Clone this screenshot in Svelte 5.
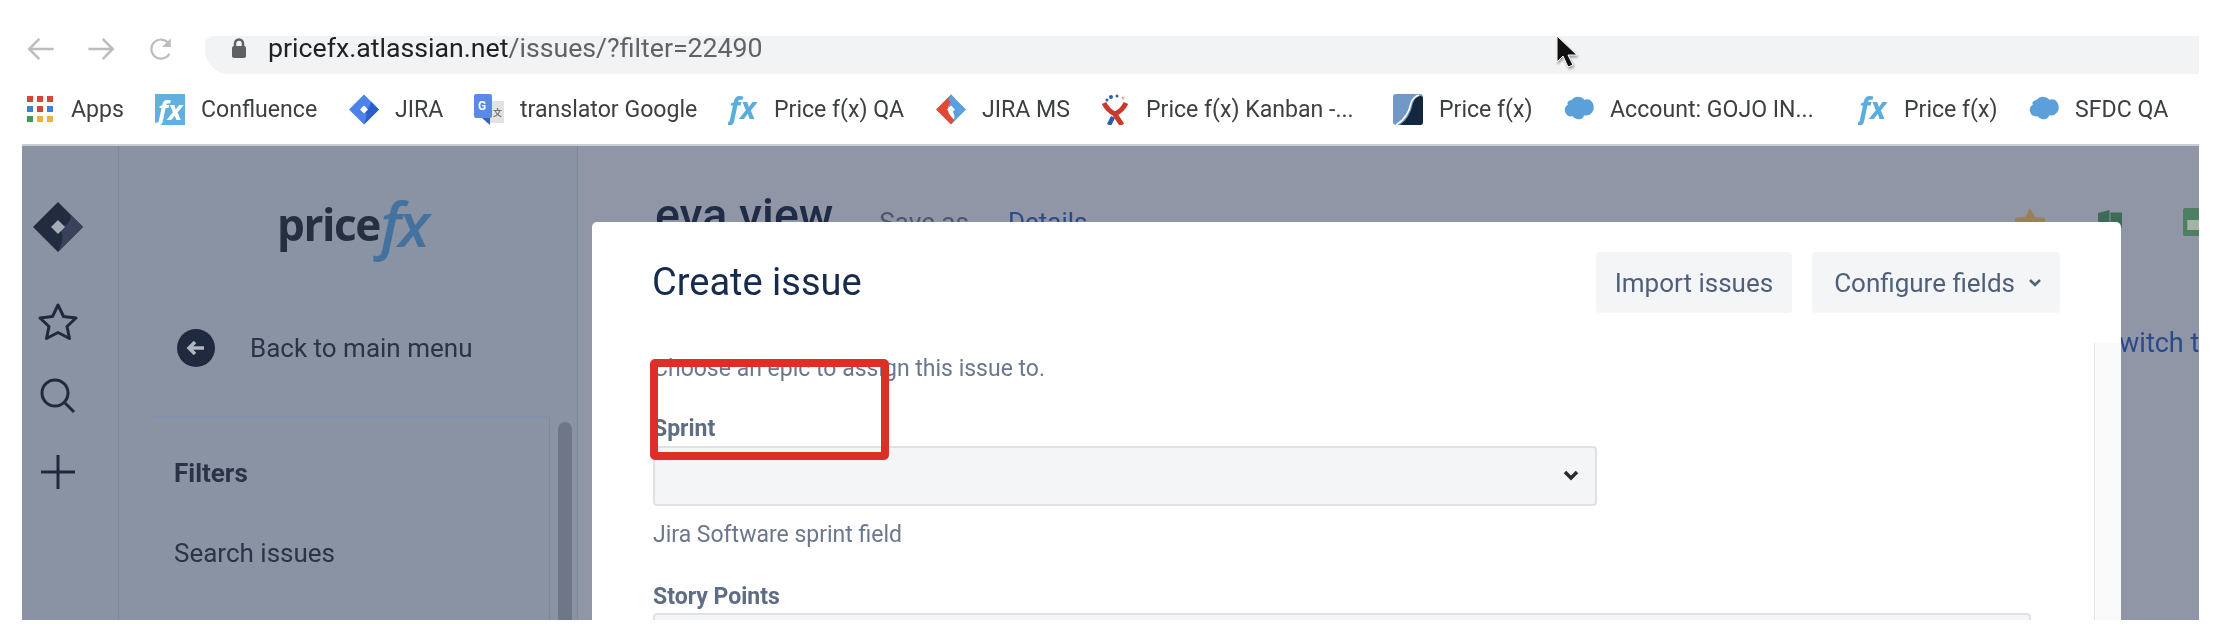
<script lang="ts">
	const bookmarks = [
		{ icon: 'apps', label: 'Apps', width: 130 },
		{ icon: 'fxbox', label: 'Confluence', width: 194 },
		{ icon: 'jira', label: 'JIRA', width: 125 },
		{ icon: 'translate', label: 'translator Google', width: 254 },
		{ icon: 'fx', label: 'Price f(x) QA', width: 208 },
		{ icon: 'jirams', label: 'JIRA MS', width: 164 },
		{ icon: 'kanban', label: 'Price f(x) Kanban -...', width: 293 },
		{ icon: 'swoosh', label: 'Price f(x)', width: 171 },
		{ icon: 'cloud', label: 'Account: GOJO IN...', width: 294 },
		{ icon: 'fx', label: 'Price f(x)', width: 171 },
		{ icon: 'cloud', label: 'SFDC QA', width: 160 }
	];
	const appColors = ['#d6453a', '#d6453a', '#d6453a', '#3f7fd8', '#d6453a', '#3f7fd8', '#3f9a55', '#eeb23e', '#eeb23e'];
</script>

<div class="shot">
	<header class="toolbar">
		<svg class="nav back-nav" viewBox="0 0 38 30" aria-hidden="true"><path d="M34 15H5M17 3 5 15l12 12" /></svg>
		<svg class="nav" viewBox="0 0 38 30" aria-hidden="true"><path d="M4 15h29M21 3l12 12-12 12" /></svg>
		<svg class="nav reload" viewBox="0 0 38 38" aria-hidden="true">
			<path d="M29 24a13 13 0 1 1-1-14" />
			<path class="solid" d="M31 3v12H19z" />
		</svg>
		<div class="omnibox">
			<svg class="lock" viewBox="0 0 16 20" aria-hidden="true">
				<rect x="1" y="8" width="14" height="12" rx="2" />
				<path d="M4 9V5.500a4 4 0 0 1 8 0V9" />
			</svg>
			<span class="url"><span class="host">pricefx.atlassian.net</span>/issues/?filter=22490</span>
		</div>
	</header>

	<nav class="bookmarks">
		{#each bookmarks as mark}
			<div class="mark" style="width: {mark.width}px">
				<span class="mark-icon">
					{#if mark.icon === 'apps'}
						<span class="apps">
							{#each appColors as color}
								<i style="background: {color}"></i>
							{/each}
						</span>
					{:else if mark.icon === 'fxbox'}
						<svg viewBox="0 0 30 31" aria-hidden="true">
							<rect width="30" height="31" fill="#62b0e0" />
							<text x="3" y="26" class="fx-glyph" fill="#fff" font-size="27">fx</text>
						</svg>
					{:else if mark.icon === 'jira'}
						<svg viewBox="0 0 30 30" aria-hidden="true">
							<path d="M15 0 30 15 15 30 0 15z" fill="#4c82ea" />
							<path d="M15 30 30 15 22 7q-1 8-7 8 5 4 0 15z" fill="#2c5fc9" />
							<path d="M15 11l4 4-4 4-4-4z" fill="#fff" />
						</svg>
					{:else if mark.icon === 'translate'}
						<svg viewBox="0 0 30 31" aria-hidden="true">
							<rect x="12" y="7" width="18" height="22" fill="#e3e3e3" />
							<rect width="18" height="24" rx="2" fill="#5b8ae6" />
							<path d="M8 24h8v7z" fill="#3e5cc0" />
							<text x="4" y="16" class="tiny" fill="#fff">G</text>
							<text x="19" y="22" class="tiny dark" fill="#777">文</text>
						</svg>
					{:else if mark.icon === 'fx'}
						<svg viewBox="0 0 30 31" aria-hidden="true">
							<text x="1" y="25" class="fx-glyph" fill="#5aaede" font-size="30">fx</text>
						</svg>
					{:else if mark.icon === 'jirams'}
						<svg viewBox="0 0 30 30" aria-hidden="true">
							<path d="M15 0 0 15l15 15 4-4-4-4q-6-7 0-14l4-4z" fill="#df4a36" />
							<path d="M15 0 30 15 15 30q7-8 0-15-5-4 0-7l-3-3z" fill="#5aa0e0" />
							<path d="M15 11l4 4-4 4-4-4z" fill="#fff" />
						</svg>
					{:else if mark.icon === 'kanban'}
						<svg viewBox="0 0 30 31" aria-hidden="true">
							<circle cx="11" cy="3" r="2" fill="#2f5ca8" />
							<circle cx="17" cy="2" r="1.500" fill="#2f5ca8" />
							<circle cx="23" cy="4" r="1.500" fill="#e8a9a0" />
							<circle cx="7" cy="6" r="1.500" fill="#2f5ca8" />
							<path d="M13 23 9 31" fill="none" stroke="#2f5ca8" stroke-width="4.500" />
							<path d="M4 9Q8 17 15 20 22 17 26 9M14 19l8 12" fill="none" stroke="#c93a2b" stroke-width="5" />
						</svg>
					{:else if mark.icon === 'swoosh'}
						<svg viewBox="0 0 30 31" aria-hidden="true">
							<rect width="30" height="31" rx="3" fill="#7199c8" />
							<path d="M7 31Q17 24 20 9 22 3 27 2q3 0 3 2v24q0 3-3 3z" fill="#15263f" />
							<path d="M3 31Q15 24 18 9 20 3 26 1" fill="none" stroke="#fff" stroke-width="1.500" />
						</svg>
					{:else}
						<svg viewBox="0 0 31 28" aria-hidden="true">
							<path d="M8 4q3-4 8-3 3 0 5 3 6-2 9 4 2 5-1 9-3 4-8 3-2 5-7 4-3 0-5-3-6 1-8-5-1-5 3-7-2-3 4-5z" fill="#5b9fdb" />
						</svg>
					{/if}
				</span>
				<span class="mark-label">{mark.label}</span>
			</div>
		{/each}
	</nav>

	<div class="page">
		<aside class="rail">
			<svg class="rail-logo" viewBox="0 0 50 50" aria-hidden="true">
				<path d="M25 0 50 25 25 50 0 25z" fill="#222c40" />
				<path d="M25 50 50 25 38 13q-1 12-13 12 9 8 0 25z" fill="#38425a" />
				<path d="M25 18l7 7-7 7-7-7z" fill="#a5acb8" />
			</svg>
			<span class="rail-slot">
				<svg width="40" height="38" viewBox="0 0 40 38" aria-hidden="true">
					<path d="M20 3l5.500 11.500 12.500 1.500-9 8.500 2.500 12L20 30.500 8.500 36.500l2.500-12-9-8.500 12.500-1.500z" />
				</svg>
			</span>
			<span class="rail-slot">
				<svg width="36" height="36" viewBox="0 0 36 36" aria-hidden="true">
					<circle cx="15" cy="15" r="13" />
					<path d="M25 25l9 9" />
				</svg>
			</span>
			<span class="rail-slot">
				<svg width="36" height="36" viewBox="0 0 36 36" aria-hidden="true"><path d="M18 1v34M1 18h34" /></svg>
			</span>
		</aside>

		<aside class="sidebar">
			<div class="brand">
				<span class="brand-price">price</span><span class="brand-fx">fx</span>
			</div>
			<div class="back">
				<span class="back-dot">
					<svg width="20" height="18" viewBox="0 0 20 18" aria-hidden="true"><path d="M18 9H3M9 3 3 9l6 6" /></svg>
				</span>
				<span>Back to main menu</span>
			</div>
			<div class="filters">
				<div class="filter-list">
					<div class="filter-row strong">Filters</div>
					<div class="filter-row">Search issues</div>
				</div>
				<div class="thumb"></div>
			</div>
		</aside>

		<main class="content">
			<div class="title-row">
				<h1>eva view</h1>
				<span class="save">Save as</span>
				<span class="details">Details</span>
				<span class="tools">
					<svg class="star" viewBox="0 0 30 14" aria-hidden="true"><path d="M15 0l5 9 10 1v4H0v-4l10-1z" /></svg>
					<svg class="sheet excel" viewBox="0 0 50 40" preserveAspectRatio="none" aria-hidden="true">
						<path d="M0 6 24 0v40L0 34z" />
						<rect x="26" y="5" width="24" height="30" />
					</svg>
					<svg class="sheet green" viewBox="0 0 36 56" preserveAspectRatio="none" aria-hidden="true">
						<path d="M0 3q0-3 3-3h22l11 11v42q0 3-3 3H3q-3 0-3-3z" />
						<rect x="6" y="24" width="20" height="20" fill="#a3b3a5" />
					</svg>
				</span>
			</div>
			<div class="switch">Switch to</div>
		</main>

		<section class="modal" aria-label="Create issue">
			<div class="modal-head">
				<h2>Create issue</h2>
				<div class="modal-actions">
					<button type="button" class="import">Import issues</button>
					<button type="button" class="configure">
						Configure fields
						<svg width="14" height="10" viewBox="0 0 14 10" aria-hidden="true"><path d="M2 2l5 5 5-5" /></svg>
					</button>
				</div>
			</div>
			<div class="modal-body">
				<form class="fields">
					<p class="hint first">Choose an epic to assign this issue to.</p>
					<div class="label">Sprint</div>
					<div class="select">
						<svg width="18" height="14" viewBox="0 0 18 14" aria-hidden="true"><path d="M3 3l6 6 6-6" /></svg>
					</div>
					<p class="hint">Jira Software sprint field</p>
					<div class="label points">Story Points</div>
					<div class="input"></div>
				</form>
				<div class="modal-track"></div>
			</div>
			<div class="annotation"></div>
		</section>
	</div>

	<svg class="cursor" width="24" height="34" viewBox="0 0 24 34" aria-hidden="true">
		<path d="M2 1v26l6-6 5 11 5-2-5-10h9z" />
	</svg>
</div>

<style>
	:global(body) {
		background: #fff;
	}

	.shot {
		position: relative;
		box-sizing: border-box;
		width: 2222px;
		height: 640px;
		padding: 36px 23px 20px 22px;
		overflow: hidden;
		background: #fff;
		font-family: Roboto, 'Liberation Sans', sans-serif;
		filter: blur(0.6px);
	}

	.toolbar {
		display: flex;
		align-items: flex-start;
		height: 38px;
	}

	.nav {
		flex: none;
		width: 32px;
		height: 26px;
		margin-right: 31px;
		fill: none;
		stroke: #bdbdbd;
		stroke-width: 3;
	}

	.back-nav {
		margin-right: 28px;
		margin-left: 3px;
	}

	.reload {
		width: 28px;
		height: 28px;
		margin-right: 0;
	}

	.reload .solid {
		fill: #bdbdbd;
		stroke: none;
	}

	.omnibox {
		display: flex;
		flex: 1;
		align-items: center;
		align-self: stretch;
		margin-left: 29px;
		padding: 0 0 14px 26px;
		border-radius: 8px 0 0 24px;
		background: #f1f3f4;
	}

	.lock {
		width: 16px;
		height: 20px;
		fill: #5f6063;
		stroke: none;
	}

	.lock path {
		fill: none;
		stroke: #5f6063;
		stroke-width: 2.500;
	}

	.url {
		margin-left: 21px;
		color: #5f6368;
		font-size: 26.700px;
		white-space: nowrap;
	}

	.host {
		color: #202124;
	}

	.bookmarks {
		display: flex;
		align-items: center;
		height: 70px;
		padding-left: 3px;
	}

	.mark {
		display: flex;
		flex: none;
		align-items: center;
		gap: 16px;
	}

	.mark-icon {
		display: flex;
		flex: none;
		align-items: center;
		justify-content: center;
		width: 30px;
		height: 31px;
	}

	.mark-icon svg {
		width: 30px;
		height: 31px;
	}

	.mark-label {
		color: #3c4043;
		font-size: 23.100px;
		white-space: nowrap;
	}

	.apps {
		display: grid;
		grid-template-columns: repeat(3, 6px);
		gap: 4px;
	}

	.apps i {
		display: block;
		width: 6px;
		height: 6px;
	}

	.fx-glyph {
		font-family: 'Open Sans', sans-serif;
		font-style: italic;
		font-weight: 700;
	}

	.tiny {
		font-family: Roboto, sans-serif;
		font-size: 12px;
		font-weight: 700;
	}

	.tiny.dark {
		font-family: 'Noto Sans CJK SC', sans-serif;
		font-size: 9px;
	}

	.page {
		position: relative;
		display: flex;
		height: 476px;
		overflow: hidden;
		border-top: 2px solid #c9ccd3;
		box-sizing: border-box;
		background: #9096a5;
		color: #2a3347;
	}

	.rail {
		display: flex;
		flex: none;
		flex-direction: column;
		align-items: center;
		box-sizing: border-box;
		width: 97px;
		padding: 56px 25px 0 0;
		border-right: 1px solid #7f8899;
		background: #8a93a3;
	}

	.rail-logo {
		flex: none;
		width: 50px;
		height: 50px;
		margin-bottom: 31px;
	}

	.rail-slot {
		display: flex;
		flex: none;
		align-items: center;
		justify-content: center;
		height: 75.500px;
	}

	.rail-slot svg {
		fill: none;
		stroke: #1f2a3e;
		stroke-width: 3;
		stroke-linejoin: round;
	}

	.sidebar {
		display: flex;
		flex: none;
		flex-direction: column;
		box-sizing: border-box;
		width: 459px;
		border-right: 1px solid #7f8899;
		background: #8a93a3;
	}

	.brand {
		display: flex;
		align-items: center;
		justify-content: center;
		box-sizing: border-box;
		height: 168px;
		padding: 0 0 14px 8px;
		line-height: 1;
	}

	.brand-price {
		margin-right: -2px;
		color: #262f42;
		font-family: 'Open Sans', sans-serif;
		font-size: 45px;
		font-weight: 700;
		letter-spacing: -1.500px;
		transform: scaleX(0.98);
		transform-origin: left center;
	}

	.brand-fx {
		color: #44719e;
		font-family: 'Open Sans', sans-serif;
		font-size: 62px;
		font-style: italic;
		font-weight: 600;
		letter-spacing: -3px;
	}

	.back {
		display: flex;
		align-items: center;
		gap: 35px;
		height: 68px;
		padding-left: 58px;
		font-size: 26px;
	}

	.back-dot {
		display: flex;
		align-items: center;
		justify-content: center;
		width: 38px;
		height: 38px;
		border-radius: 50%;
		background: #1f2a3e;
	}

	.back-dot svg {
		fill: none;
		stroke: #b0b5c0;
		stroke-width: 3.500;
	}

	.filters {
		display: flex;
		flex: 1;
		margin: 34px 0 0 31px;
	}

	.filter-list {
		box-sizing: border-box;
		width: 400px;
		padding: 15px 0 0 24px;
		border-top: 2px solid #8290ab;
		border-right: 1px solid #7f8899;
	}

	.filter-row {
		display: flex;
		align-items: center;
		height: 80px;
		font-size: 26px;
	}

	.filter-row.strong {
		font-weight: 700;
	}

	.thumb {
		width: 14px;
		margin: 6px 0 0 8px;
		border-radius: 7px 7px 0 0;
		background: #6f7686;
	}

	.content {
		flex: 1;
		min-width: 0;
		padding-left: 77px;
		overflow: hidden;
	}

	.title-row {
		display: flex;
		align-items: baseline;
		height: 96px;
	}

	h1 {
		margin: 43px 0 0;
		color: #1f2b47;
		font-size: 46.500px;
		font-weight: 500;
		line-height: 52px;
	}

	.save,
	.details {
		font-size: 26px;
	}

	.save {
		margin-left: 46px;
		color: #4d566b;
	}

	.details {
		margin-left: 39px;
		color: #2a4a8c;
	}

	.tools {
		display: flex;
		align-items: flex-start;
		align-self: flex-start;
		margin: 0 -10px 0 auto;
		padding-top: 62px;
	}

	.star {
		flex: none;
		width: 30px;
		height: 14px;
		fill: #97805a;
	}

	.sheet.excel {
		flex: none;
		width: 24px;
		height: 20px;
		margin: 2px 0 0 53px;
		fill: #3f6a58;
	}

	.sheet.green {
		flex: none;
		width: 26px;
		height: 28px;
		margin-left: 61px;
		fill: #4f7f62;
	}

	.switch {
		margin: 87px 0 0 1448px;
		color: #2a4a8c;
		font-size: 27px;
		line-height: 28px;
		white-space: nowrap;
	}

	.modal {
		position: absolute;
		top: 76px;
		left: 570px;
		display: flex;
		flex-direction: column;
		width: 1529px;
		height: 400px;
		border-radius: 5px 5px 0 0;
		background: #fff;
		color: #172b4d;
	}

	.modal-head {
		display: flex;
		flex: none;
		justify-content: space-between;
		box-sizing: border-box;
		height: 121px;
		padding: 30px 61px 0 60px;
	}

	h2 {
		margin: 0;
		font-size: 38px;
		font-weight: 400;
		line-height: 60px;
	}

	.modal-actions {
		display: flex;
		gap: 20px;
	}

	.modal-actions button {
		display: flex;
		align-items: center;
		height: 61px;
		border: 0;
		border-radius: 4px;
		background: #f4f5f7;
		color: #505f79;
		font: inherit;
		font-size: 26px;
	}

	.import {
		padding: 0 19px;
	}

	.configure {
		gap: 13px;
		padding: 0 18px 0 22px;
	}

	.configure svg {
		fill: none;
		stroke: #505f79;
		stroke-width: 2.500;
	}

	.modal-body {
		display: flex;
		flex: 1;
		min-height: 0;
	}

	.fields {
		flex: 1;
		padding: 11px 63px 0 61px;
		overflow: hidden;
	}

	.hint {
		margin: 0;
		color: #6b778c;
		font-size: 23px;
		line-height: 30px;
	}

	.hint.first {
		height: 30px;
	}

	.label {
		margin-top: 30px;
		color: #5e6c84;
		font-size: 23px;
		font-weight: 700;
		line-height: 30px;
	}

	.select {
		display: flex;
		align-items: center;
		justify-content: flex-end;
		box-sizing: border-box;
		width: 944px;
		height: 60px;
		margin-top: 2px;
		padding-right: 15px;
		border: 2px solid #dfe1e6;
		border-radius: 4px;
		background: #f4f5f7;
	}

	.select svg {
		fill: none;
		stroke: #2b2b2b;
		stroke-width: 3.500;
	}

	.select + .hint {
		margin-top: 14px;
	}

	.label.points {
		margin-top: 32px;
	}

	.input {
		box-sizing: border-box;
		height: 60px;
		margin-top: 1px;
		border: 2px solid #dfe1e6;
		border-radius: 4px;
		background: #f4f5f7;
	}

	.modal-track {
		flex: none;
		box-sizing: border-box;
		width: 27px;
		border-left: 1px solid #e6e6e6;
		background: #fafafa;
	}

	.annotation {
		position: absolute;
		top: 137px;
		left: 58px;
		box-sizing: border-box;
		width: 239px;
		height: 101px;
		border: 8px solid #dc3027;
		border-radius: 5px;
	}

	.cursor {
		position: absolute;
		top: 35px;
		left: 1555px;
		filter: drop-shadow(1px 2px 1px rgb(0 0 0 / 35%));
	}

	.cursor path {
		fill: #111;
		stroke: #fff;
		stroke-width: 1;
	}
</style>
